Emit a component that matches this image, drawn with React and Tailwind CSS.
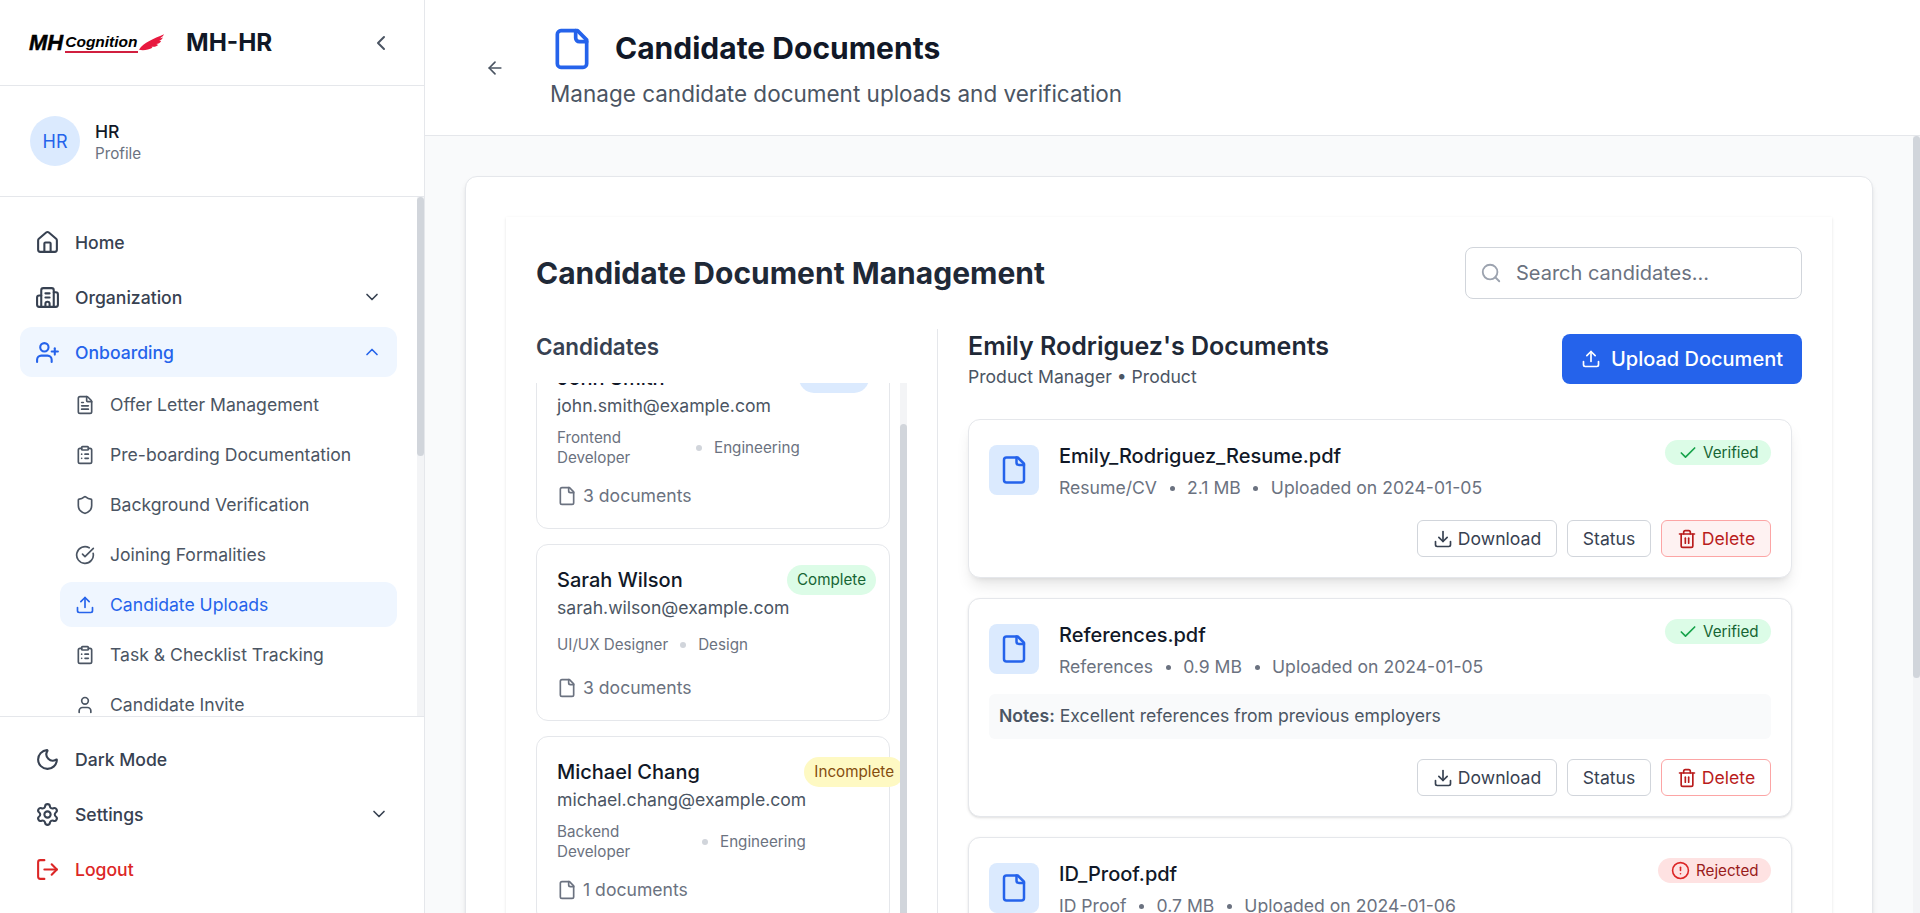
import {
  ArrowLeft, Building2, Check, ChevronDown, ChevronLeft, ChevronUp, CircleAlert, CircleCheckBig,
  ClipboardList, Download, FileText, House, LogOut, Moon, Search, Settings, Shield, Trash2,
  Upload, User, UserPlus,
} from "lucide-react";

const subItems = [
  { label: "Offer Letter Management", icon: FileText },
  { label: "Pre-boarding Documentation", icon: ClipboardList },
  { label: "Background Verification", icon: Shield },
  { label: "Joining Formalities", icon: CircleCheckBig },
  { label: "Candidate Uploads", icon: Upload, active: true },
  { label: "Task & Checklist Tracking", icon: ClipboardList },
  { label: "Candidate Invite", icon: User },
];

const candidates = [
  {
    name: "John Smith",
    email: "john.smith@example.com",
    role: "Frontend Developer",
    roleWidth: "w-[127px]",
    dept: "Engineering",
    docs: 3,
    badge: "",
    badgeClass: "bg-[#dbeafe] text-[#1e40af] w-[70px]",
  },
  {
    name: "Sarah Wilson",
    email: "sarah.wilson@example.com",
    role: "UI/UX Designer",
    roleWidth: "",
    dept: "Design",
    docs: 3,
    badge: "Complete",
    badgeClass: "bg-[#dcfce7] text-[#166534] -mr-[7px]",
  },
  {
    name: "Michael Chang",
    email: "michael.chang@example.com",
    role: "Backend Developer",
    roleWidth: "w-[133px]",
    dept: "Engineering",
    docs: 1,
    badge: "Incomplete",
    badgeClass: "bg-[#fef9c3] text-[#854d0e] -mr-[35px]",
  },
];

const documents = [
  {
    name: "Emily_Rodriguez_Resume.pdf",
    type: "Resume/CV",
    size: "2.1 MB",
    date: "2024-01-05",
    status: "Verified",
    raised: true,
  },
  {
    name: "References.pdf",
    type: "References",
    size: "0.9 MB",
    date: "2024-01-05",
    status: "Verified",
    notes: "Excellent references from previous employers",
  },
  {
    name: "ID_Proof.pdf",
    type: "ID Proof",
    size: "0.7 MB",
    date: "2024-01-06",
    status: "Rejected",
  },
];

// lucide's older file outline, the fold is a bit smaller than the current one
const FileIcon = ({ size, className }) => (
  <svg
    width={size}
    height={size}
    viewBox="0 0 24 24"
    fill="none"
    stroke="currentColor"
    strokeWidth="2"
    strokeLinecap="round"
    strokeLinejoin="round"
    className={className}
  >
    <path d="M15 2H6a2 2 0 0 0-2 2v16a2 2 0 0 0 2 2h12a2 2 0 0 0 2-2V7Z" />
    <path d="M14 2v4a2 2 0 0 0 2 2h4" />
  </svg>
);

const Logo = () => (
  <div className="flex items-end w-[137px] h-[20px] shrink-0 font-['Liberation_Sans',sans-serif] italic font-bold text-black select-none">
    <span className="text-[22px] leading-[20px] font-black mr-[2px] [-webkit-text-stroke:0.5px_black]">MH</span>
    <span className="text-[15.5px] leading-[18px] border-b-2 border-[#d11f3f]">Cognition</span>
    <svg viewBox="0 0 28 18" className="w-[27px] h-[18px] mb-px shrink-0">
      <path d="M1 16C6 8 16 5 27 0c-1 2-2 3-4 4 1 0 2 0 3-1-1 2-2 3-4 4h2c-1 2-3 3-5 3l2 1c-2 2-5 2-7 2l1 1c-4 2-9 3-14 2Z" fill="#e8193f" />
    </svg>
  </div>
);

const Scrollbar = ({ thumb, offset = "" }) => (
  <div className="w-[7px] shrink-0 bg-[#f3f4f6]">
    <div className={`${thumb} ${offset} bg-[#d1d5db] rounded-[4px]`} />
  </div>
);

const NavItem = ({ icon: Icon, label, active, chevron, danger }) => (
  <div
    className={`flex items-center shrink-0 h-[50px] px-[15px] gap-[15px] rounded-xl text-[17.6px] font-medium ${
      active ? "bg-[#eff6ff] text-[#2563eb]" : danger ? "text-[#dc2626]" : "text-[#374151]"
    }`}
  >
    <Icon size={25} strokeWidth={2} className="shrink-0" />
    <span className="flex-1 pt-[2px]">{label}</span>
    {chevron === "down" && <ChevronDown size={20} />}
    {chevron === "up" && <ChevronUp size={20} />}
  </div>
);

const Sidebar = () => (
  <aside className="w-[425px] shrink-0 h-full flex flex-col bg-white border-r border-[#e5e7eb]">
    <div className="h-[86px] shrink-0 flex items-center border-b border-[#e5e7eb] pl-[29px] pr-[31px]">
      <Logo />
      <span className="ml-[20px] text-[24.3px] font-bold text-[#111827] flex-1">MH-HR</span>
      <ChevronLeft size={24} className="text-[#4b5563]" />
    </div>
    <div className="h-[111px] shrink-0 flex items-center gap-[15px] px-[30px] border-b border-[#e5e7eb]">
      <div className="w-[50px] h-[50px] rounded-full bg-[#dbeafe] text-[#2563eb] flex items-center justify-center text-[18px]">
        HR
      </div>
      <div className="pt-[2px]">
        <div className="text-[17.6px] leading-[24px] font-medium text-[#111827]">HR</div>
        <div className="text-[15.2px] leading-[20px] text-[#6b7280]">Profile</div>
      </div>
    </div>
    <div className="flex-1 min-h-0 flex overflow-hidden">
      <nav className="flex-1 pt-[20px] px-[20px] overflow-hidden flex flex-col gap-[5px]">
        <NavItem icon={House} label="Home" />
        <NavItem icon={Building2} label="Organization" chevron="down" />
        <NavItem icon={UserPlus} label="Onboarding" chevron="up" active />
        <div className="pl-[40px] flex flex-col gap-[5px]">
          {subItems.map((item) => (
            <div
              key={item.label}
              className={`flex items-center shrink-0 h-[45px] px-[15px] gap-[15px] rounded-xl text-[17.6px] ${
                item.active ? "bg-[#eff6ff] text-[#2563eb]" : "text-[#4b5563]"
              }`}
            >
              <item.icon size={20} className="shrink-0" />
              <span className="pt-[2px]">{item.label}</span>
            </div>
          ))}
        </div>
      </nav>
      <Scrollbar thumb="h-[259px]" />
    </div>
    <div className="h-[197px] shrink-0 border-t border-[#e5e7eb] pt-[17px] px-[20px] flex flex-col gap-[5px]">
      <NavItem icon={Moon} label="Dark Mode" />
      <NavItem icon={Settings} label="Settings" chevron="down" />
      <NavItem icon={LogOut} label="Logout" danger />
    </div>
  </aside>
);

const CandidateCard = ({ candidate, first }) => (
  <div className={`shrink-0 w-[354px] bg-white border border-[#e5e7eb] rounded-xl p-[20px] ${first ? "-mt-[41px]" : ""}`}>
    <div className="flex justify-between items-center h-[30px]">
      <span className="text-[20px] font-medium text-[#111827]">{candidate.name}</span>
      <span className={`h-[30px] px-[10px] rounded-full flex items-center justify-center text-[15.2px] ${candidate.badgeClass}`}>
        {candidate.badge}
      </span>
    </div>
    <div className="pt-[1px] text-[17.6px] leading-[24px] text-[#4b5563] whitespace-nowrap">{candidate.email}</div>
    <div className="mt-[10px] min-h-[30px] flex items-center gap-[12px] text-[15.2px] leading-[20px] text-[#6b7280]">
      <span className={candidate.roleWidth}>{candidate.role}</span>
      <span className="w-[6px] h-[6px] rounded-full bg-[#d1d5db] shrink-0" />
      <span>{candidate.dept}</span>
    </div>
    <div className="mt-[16px] h-[24px] flex items-center gap-[6px] text-[17.6px] text-[#6b7280]">
      <FileIcon size={20} />
      <span>{candidate.docs} documents</span>
    </div>
  </div>
);

const StatusBadge = ({ status }) =>
  status === "Verified" ? (
    <span className="h-[25px] w-[106px] pl-[13px] rounded-full bg-[#dcfce7] text-[#166534] text-[15.2px] flex items-center gap-[5px]">
      <Check size={20} className="text-[#16a34a]" />
      <span className="pt-[2px]">Verified</span>
    </span>
  ) : (
    <span className="h-[25px] w-[113px] pl-[13px] rounded-full bg-[#fee2e2] text-[#991b1b] text-[15.2px] flex items-center gap-[6px]">
      <CircleAlert size={19} className="text-[#dc2626]" />
      <span className="pt-[2px]">Rejected</span>
    </span>
  );

const DocumentCard = ({ doc }) => (
  <div
    className={`bg-white border border-[#e5e7eb] rounded-xl pt-[25px] pb-[20px] px-[20px] ${
      doc.raised ? "shadow-lg" : "shadow-sm"
    }`}
  >
    <div className="flex items-start h-[50px]">
      <div className="w-[50px] h-[50px] rounded-lg bg-[#dbeafe] text-[#2563eb] flex items-center justify-center shrink-0">
        <FileIcon size={30} />
      </div>
      <div className="ml-[20px] flex-1 -mt-[5px]">
        <div className="text-[20px] leading-[32px] font-medium text-[#111827]">{doc.name}</div>
        <div className="flex items-center gap-[12.5px] text-[17.6px] leading-[24px] text-[#6b7280] mt-[4px]">
          <span>{doc.type}</span>
          <span className="w-[5px] h-[5px] rounded-full bg-[#6b7280]" />
          <span>{doc.size}</span>
          <span className="w-[5px] h-[5px] rounded-full bg-[#6b7280]" />
          <span>Uploaded on {doc.date}</span>
        </div>
      </div>
      <div className="-mt-[5px]">
        <StatusBadge status={doc.status} />
      </div>
    </div>
    {doc.notes && (
      <div className="mt-[20px] h-[45px] flex items-center px-[10px] bg-[#f9fafb] rounded-md text-[17.6px] text-[#4b5563]">
        <span className="font-semibold mr-[5px]">Notes:</span>
        {doc.notes}
      </div>
    )}
    <div className={`flex justify-end gap-[10px] ${doc.notes ? "mt-[20px]" : "mt-[25px]"}`}>
      <button className="h-[37px] w-[140px] rounded-md border border-[#d1d5db] bg-white text-[17.6px] text-[#374151] flex items-center justify-center gap-[5px]">
        <Download size={20} />
        <span className="pt-[2px]">Download</span>
      </button>
      <button className="h-[37px] w-[84px] pt-[2px] rounded-md border border-[#d1d5db] bg-white text-[17.6px] text-[#374151]">
        Status
      </button>
      <button
        className={`h-[37px] w-[110px] rounded-md border border-[#fca5a5] text-[17.6px] text-[#b91c1c] flex items-center justify-center gap-[5px] ${
          doc.raised ? "bg-[#fef2f2]" : "bg-white"
        }`}
      >
        <Trash2 size={20} />
        <span className="pt-[2px]">Delete</span>
      </button>
    </div>
  </div>
);

export default function App() {
  return (
    <div className="h-screen flex overflow-hidden bg-[#f9fafb] font-['Inter',sans-serif]">
      <Sidebar />
      <main className="flex-1 min-w-0 h-full flex flex-col">
        <header className="h-[136px] shrink-0 bg-white border-b border-[#e5e7eb] flex items-center pl-[60px]">
          <ArrowLeft size={20} className="text-[#4b5563]" />
          <div className="ml-[45px] mt-[2px]">
            <div className="flex items-center gap-[21px]">
              <FileIcon size={44} className="text-[#2563eb]" />
              <h1 className="text-[30px] font-bold text-[#111827]">Candidate Documents</h1>
            </div>
            <p className="text-[22.5px] text-[#4b5563] mt-[6px]">Manage candidate document uploads and verification</p>
          </div>
        </header>
        <div className="flex-1 min-h-0 flex">
          <div className="flex-1 min-w-0 overflow-hidden p-[40px]">
            <div className="bg-white border border-[#e5e7eb] rounded-xl shadow-md p-[40px]">
              <div className="bg-white shadow-sm p-[30px]">
                <div className="flex items-center justify-between">
                  <h2 className="text-[30px] font-bold text-[#1f2937]">Candidate Document Management</h2>
                  <div className="w-[337px] h-[52px] border border-[#d1d5db] rounded-lg flex items-center px-[14px] gap-[14px] text-[20px] text-[#6b7280]">
                    <Search size={22} className="text-[#9ca3af]" />
                    <span>Search candidates...</span>
                  </div>
                </div>
                <div className="mt-[30px] flex">
                  <div className="w-[402px] shrink-0 border-r border-[#e5e7eb] pr-[30px]">
                    <h3 className="text-[22.4px] leading-[36px] font-semibold text-[#374151] mb-[18px]">Candidates</h3>
                    <div className="flex h-[900px] overflow-hidden">
                      <div className="flex-1 min-w-0 overflow-hidden flex flex-col gap-[15px]">
                        {candidates.map((c, i) => (
                          <CandidateCard key={c.email} candidate={c} first={i === 0} />
                        ))}
                      </div>
                      <Scrollbar thumb="h-[500px]" offset="mt-[41px]" />
                    </div>
                  </div>
                  <div className="flex-1 min-w-0 pl-[30px]">
                    <div className="flex items-center justify-between h-[60px] mb-[30px]">
                      <div>
                        <h3 className="text-[25px] leading-[33px] font-semibold text-[#1f2937]">Emily Rodriguez's Documents</h3>
                        <p className="text-[17.6px] leading-[24px] text-[#4b5563] mt-[2px]">Product Manager • Product</p>
                      </div>
                      <button className="w-[240px] h-[50px] rounded-lg bg-[#2563eb] text-white text-[20px] font-medium flex items-center justify-center gap-[10px]">
                        <Upload size={20} />
                        Upload Document
                      </button>
                    </div>
                    <div className="mr-[10px] flex flex-col gap-[20px]">
                      {documents.map((doc) => (
                        <DocumentCard key={doc.name} doc={doc} />
                      ))}
                    </div>
                  </div>
                </div>
              </div>
            </div>
          </div>
          <Scrollbar thumb="h-[542px]" />
        </div>
      </main>
    </div>
  );
}
